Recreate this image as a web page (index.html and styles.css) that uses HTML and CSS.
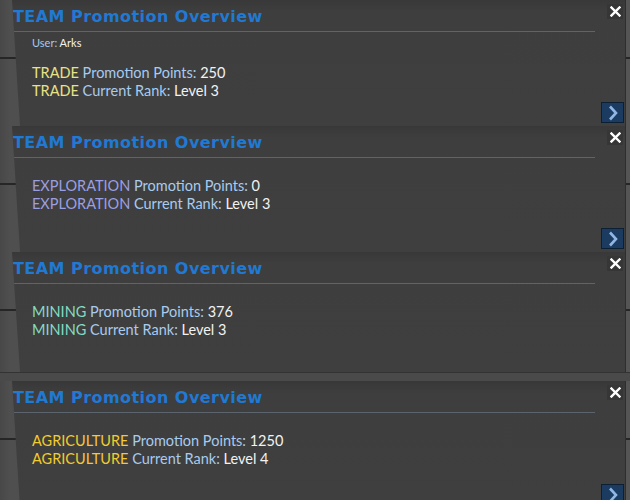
FILE: index.html
```html
<!DOCTYPE html>
<html lang="en">
<head>
  <meta charset="UTF-8" />
  <meta name="viewport" content="width=device-width, initial-scale=1.0" />
  <title>TEAM Promotion Overview</title>
  <link rel="stylesheet" href="styles.css">
</head>
<body>
  <div id="stack">

    <section class="panel p1">
      <div class="panel-inner">
        <div class="panel-head">
          <h2>TEAM Promotion Overview</h2>
          <button class="close" aria-label="Close">
            <svg width="11" height="11" viewBox="0 0 11 11"><path d="M1.5 1.5 L9.5 9.5 M9.5 1.5 L1.5 9.5" stroke="#fff" stroke-width="2.4" stroke-linecap="square"/></svg>
          </button>
        </div>
        <div class="panel-body">
          <p class="user">User: <span>Arks</span></p>
          <p class="stat first"><span class="cat trade">TRADE</span> <span class="label">Promotion Points:</span> 250</p>
          <p class="stat"><span class="cat trade">TRADE</span> <span class="label">Current Rank:</span> Level 3</p>
        </div>
        <div class="panel-foot">
          <button class="next" aria-label="Next">
            <svg width="12" height="16" viewBox="0 0 12 16"><path d="M3 1.5 L9 8 L3 14.5" fill="none" stroke="#8fb6e4" stroke-width="2.6"/></svg>
          </button>
        </div>
      </div>
    </section>

    <section class="panel p2">
      <div class="panel-inner">
        <div class="panel-head">
          <h2>TEAM Promotion Overview</h2>
          <button class="close" aria-label="Close">
            <svg width="11" height="11" viewBox="0 0 11 11"><path d="M1.5 1.5 L9.5 9.5 M9.5 1.5 L1.5 9.5" stroke="#fff" stroke-width="2.4" stroke-linecap="square"/></svg>
          </button>
        </div>
        <div class="panel-body">
          <p class="stat first"><span class="cat explore">EXPLORATION</span> <span class="label">Promotion Points:</span> 0</p>
          <p class="stat"><span class="cat explore">EXPLORATION</span> <span class="label">Current Rank:</span> Level 3</p>
        </div>
        <div class="panel-foot">
          <button class="next" aria-label="Next">
            <svg width="12" height="16" viewBox="0 0 12 16"><path d="M3 1.5 L9 8 L3 14.5" fill="none" stroke="#8fb6e4" stroke-width="2.6"/></svg>
          </button>
        </div>
      </div>
    </section>

    <section class="panel p3">
      <div class="panel-inner">
        <div class="panel-head">
          <h2>TEAM Promotion Overview</h2>
          <button class="close" aria-label="Close">
            <svg width="11" height="11" viewBox="0 0 11 11"><path d="M1.5 1.5 L9.5 9.5 M9.5 1.5 L1.5 9.5" stroke="#fff" stroke-width="2.4" stroke-linecap="square"/></svg>
          </button>
        </div>
        <div class="panel-body">
          <p class="stat first"><span class="cat mining">MINING</span> <span class="label">Promotion Points:</span> 376</p>
          <p class="stat"><span class="cat mining">MINING</span> <span class="label">Current Rank:</span> Level 3</p>
        </div>
      </div>
    </section>

    <div class="seam"></div>

    <section class="panel p4">
      <div class="panel-inner">
        <div class="panel-head">
          <h2>TEAM Promotion Overview</h2>
          <button class="close" aria-label="Close">
            <svg width="11" height="11" viewBox="0 0 11 11"><path d="M1.5 1.5 L9.5 9.5 M9.5 1.5 L1.5 9.5" stroke="#fff" stroke-width="2.4" stroke-linecap="square"/></svg>
          </button>
        </div>
        <div class="panel-body">
          <p class="stat first"><span class="cat agri">AGRICULTURE</span> <span class="label">Promotion Points:</span> 1250</p>
          <p class="stat"><span class="cat agri">AGRICULTURE</span> <span class="label">Current Rank:</span> Level 4</p>
        </div>
        <div class="panel-foot">
          <button class="next" aria-label="Next">
            <svg width="12" height="16" viewBox="0 0 12 16"><path d="M3 1.5 L9 8 L3 14.5" fill="none" stroke="#8fb6e4" stroke-width="2.6"/></svg>
          </button>
        </div>
      </div>
    </section>

  </div>
</body>
</html>
```

FILE: styles.css
```css
html, body {
  margin: 0;
  padding: 0;
  height: 100%;
  overflow: hidden;
  background: #4b4b4b;
  font-family: 'Lato', 'Noto Sans', sans-serif;
  color: #f2f2f2;
}
#stack {
  display: flex;
  flex-direction: column;
}
.panel {
  display: flex;
  flex-shrink: 0;
  overflow: hidden;
  /* game backdrop peeking out on the left, with its dark seam */
  background:
    linear-gradient(to bottom, transparent 57px, #262626 57px, #262626 59px, transparent 59px),
    linear-gradient(to right, #484848, #4f4f4f 10px, #555 100%);
}
.p1 { height: 126px; }
.p2 { height: 126px; }
.p3 { height: 120px; }
.p4 { height: 127px; }
.seam {
  height: 8px;
  background: #4a4a4a;
  border-top: 1px solid #333;
}
.panel-inner {
  flex: 1;
  margin-right: 4px;
  display: flex;
  flex-direction: column;
  background: linear-gradient(to bottom, #383838, #3e3e3e 12px, #3f3f3f);
  clip-path: polygon(12px 0, 100% 0, 100% 100%, 20px 100%);
  box-shadow: inset -1px 0 0 #2e2e2e;
}
.panel-head {
  display: flex;
  align-items: flex-start;
  height: 32px;
  padding-left: 13px;
}
.panel-head h2 {
  flex: 1;
  margin: 0;
  height: 31px;
  line-height: 33px;
  border-bottom: 1px solid #5c646e;
  font-family: 'DejaVu Sans', sans-serif;
  font-weight: bold;
  font-size: 16px;
  letter-spacing: 0.45px;
  color: #2079d2;
  white-space: nowrap;
}
.close {
  width: 16px;
  height: 15px;
  margin: 4px 3px 0 12px;
  padding: 0;
  border: none;
  background: #363636;
  display: flex;
  align-items: center;
  justify-content: center;
}
.panel-body {
  flex: 1;
  padding-left: 32px;
}
.panel-body p {
  margin: 0;
  white-space: nowrap;
}
.user {
  margin-top: 4px !important;
  font-size: 11px;
  line-height: 14px;
  color: #a9c8e8;
}
.user span {
  color: #f2f2f2;
}
.stat {
  font-size: 14.5px;
  line-height: 18px;
}
.stat.first {
  margin-top: 19px;
}
.p1 .stat.first {
  margin-top: 14px;
}
.label { color: #a8cbef; }
.cat.trade { color: #e8e286; }
.cat.explore { color: #9c9ee2; }
.cat.mining { color: #82dcc4; }
.cat.agri { color: #f2cb2e; }
.panel-foot {
  display: flex;
  justify-content: flex-end;
  padding: 0 2px 3px 0;
}
.next {
  width: 23px;
  height: 21px;
  padding: 0;
  border: 1px solid #0c1f33;
  background: #1b3c60;
  display: flex;
  align-items: center;
  justify-content: center;
}
```
